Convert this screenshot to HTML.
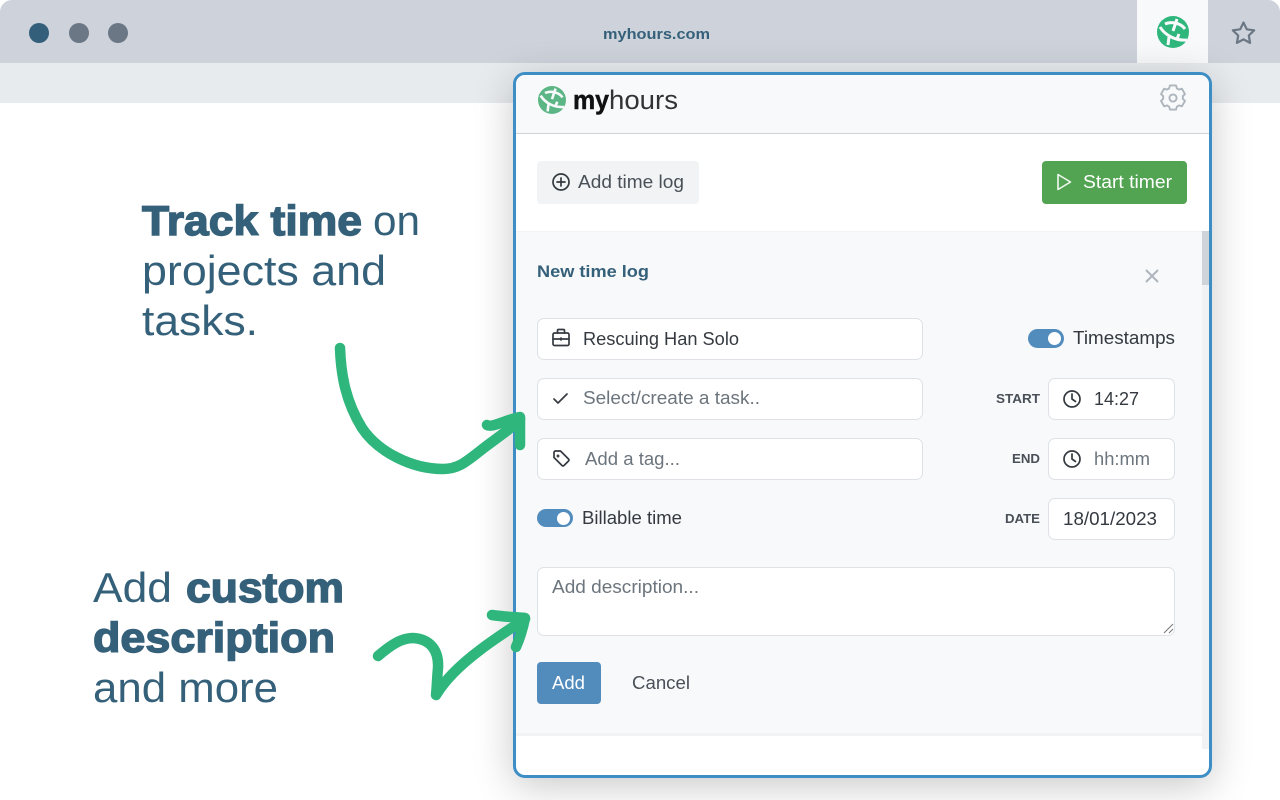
<!DOCTYPE html>
<html lang="en">
<head>
<meta charset="utf-8">
<title>My Hours</title>
<style>
html,body{margin:0;padding:0;width:1280px;height:800px;overflow:hidden;background:#fff;font-family:"Liberation Sans",sans-serif}
.b{position:absolute;box-sizing:border-box}
.inp{background:#fff;border:1.5px solid #dee2e6;border-radius:7px}
svg{position:absolute;left:0;top:0}
text{font-family:"Liberation Sans",sans-serif}
.h{font-size:42px;fill:#35607a}
.hb{font-size:42px;fill:#35607a;font-weight:700;stroke:#35607a;stroke-width:1.4px}
.t{font-size:18px;fill:#343a40}
.p{font-size:18px;fill:#6c757d}
.l{font-size:13px;font-weight:700;fill:#495057}
.ic{fill:none;stroke:#343a40;stroke-width:1.7;stroke-linecap:round;stroke-linejoin:round}
</style>
</head>
<body>
<div class="b" style="left:0;top:0;width:1280px;height:63px;background:#ced3db;border-radius:12px 12px 0 0"></div>
<div class="b" style="left:0;top:63px;width:1280px;height:40px;background:#e8ebee"></div>
<div class="b" style="left:1137px;top:0;width:71px;height:63px;background:#f8f9fb"></div>
<div class="b" style="left:29px;top:23px;width:20px;height:20px;border-radius:50%;background:#345f7a"></div>
<div class="b" style="left:69px;top:23px;width:20px;height:20px;border-radius:50%;background:#6b7785"></div>
<div class="b" style="left:108px;top:23px;width:20px;height:20px;border-radius:50%;background:#6b7785"></div>

<div class="b" style="left:513px;top:72px;width:699px;height:706px;background:#fff;border:3px solid #3d8ec5;border-radius:12px;box-shadow:0 8px 40px rgba(0,0,0,.22);overflow:hidden">
  <div class="b" style="left:0;top:0;width:693px;height:59px;background:#f8f9fb;border-bottom:1px solid #ced4da"></div>
  <div class="b" style="left:0;top:156px;width:686px;height:505px;background:#f8f9fb;border-top:1.5px solid #f1f3f5;border-bottom:3px solid #f1f3f5"></div>
  <div class="b" style="left:686px;top:156px;width:7px;height:518px;background:#f1f2f3"></div>
  <div class="b" style="left:686px;top:156px;width:7px;height:54px;background:#ced4da"></div>
</div>

<div class="b" style="left:537px;top:161px;width:162px;height:43px;background:#f1f3f5;border-radius:4px"></div>
<div class="b" style="left:1042px;top:161px;width:145px;height:43px;background:#52a452;border-radius:4px"></div>
<div class="b inp" style="left:537px;top:318px;width:386px;height:42px"></div>
<div class="b inp" style="left:537px;top:378px;width:386px;height:42px"></div>
<div class="b inp" style="left:537px;top:438px;width:386px;height:42px"></div>
<div class="b inp" style="left:1048px;top:378px;width:127px;height:42px"></div>
<div class="b inp" style="left:1048px;top:438px;width:127px;height:42px"></div>
<div class="b inp" style="left:1048px;top:498px;width:127px;height:42px"></div>
<div class="b inp" style="left:537px;top:567px;width:638px;height:69px"></div>
<div class="b" style="left:537px;top:662px;width:64px;height:42px;background:#528cbd;border-radius:4px"></div>
<div class="b" style="left:1028px;top:329px;width:36px;height:19px;background:#528cbd;border-radius:10px"></div>
<div class="b" style="left:1048px;top:332px;width:13px;height:13px;background:#fff;border-radius:50%"></div>
<div class="b" style="left:537px;top:509px;width:36px;height:18px;background:#528cbd;border-radius:10px"></div>
<div class="b" style="left:557px;top:512px;width:13px;height:13px;background:#fff;border-radius:50%"></div>

<svg width="1280" height="800" viewBox="0 0 1280 800" xmlns="http://www.w3.org/2000/svg">
  <text x="603" y="39" font-size="15" font-weight="700" fill="#35607a" textLength="107" lengthAdjust="spacingAndGlyphs">myhours.com</text>

  <!-- browser tab logo -->
  <g transform="translate(1157,16)">
    <circle cx="16" cy="16" r="16" fill="#2fb67c"/>
    <g fill="none" stroke="#f8f9fb" stroke-width="3" stroke-linecap="butt">
      <path d="M3 11C8 19 18 25 30 24"/>
      <path d="M8 8C14 5 24 7 28 13"/>
      <path d="M20 3L16 15"/>
      <path d="M12 21L11 29"/>
      <path d="M22 18L20 23"/>
    </g>
  </g>
  <!-- star -->
  <path d="M1243.500 22.500l3.300 6.800 7.400 1-5.400 5.200 1.300 7.400-6.600-3.500-6.600 3.500 1.300-7.400-5.400-5.200 7.400-1z" fill="none" stroke="#6b7785" stroke-width="2.200" stroke-linejoin="round"/>

  <!-- popup logo -->
  <g transform="translate(538,86) scale(.875)">
    <circle cx="16" cy="16" r="16" fill="#5cb585"/>
    <g fill="none" stroke="#f8f9fb" stroke-width="3" stroke-linecap="butt">
      <path d="M3 11C8 19 18 25 30 24"/>
      <path d="M8 8C14 5 24 7 28 13"/>
      <path d="M20 3L16 15"/>
      <path d="M12 21L11 29"/>
      <path d="M22 18L20 23"/>
    </g>
  </g>
  <text x="573" y="109" font-size="27" font-weight="700" fill="#111" stroke="#111" stroke-width=".5" textLength="36" lengthAdjust="spacingAndGlyphs">my</text>
  <text x="609" y="109" font-size="27" fill="#333" textLength="69" lengthAdjust="spacingAndGlyphs">hours</text>

  <!-- gear -->
  <g fill="none" stroke="#adb5bd" stroke-width="2.100" stroke-linejoin="round" transform="translate(1173,98) scale(.9) translate(-1173,-98.500)">
    <path d="M1169.600 84.500h6.800l.9 3.300 2.300 1.300 3.300-.9 3.400 5.900-2.400 2.400v2.900l2.400 2.400-3.400 5.900-3.300-.9-2.300 1.300-.9 3.300h-6.800l-.9-3.300-2.300-1.300-3.300.9-3.400-5.900 2.400-2.400v-2.900l-2.400-2.400 3.400-5.900 3.300.9 2.300-1.300z"/>
    <circle cx="1173" cy="98.500" r="4"/>
  </g>

  <!-- add time log -->
  <circle cx="561" cy="182" r="8" class="ic"/>
  <path d="M561 178v8M557 182h8" class="ic"/>
  <text x="578" y="188" class="t" textLength="106" lengthAdjust="spacingAndGlyphs" style="fill:#495057">Add time log</text>

  <!-- start timer -->
  <path d="M1058 174.500l12.500 7.500-12.500 7.500z" fill="none" stroke="#fff" stroke-width="1.600" stroke-linejoin="round" opacity=".92"/>
  <text x="1083" y="188" class="t" style="fill:#fff" textLength="89" lengthAdjust="spacingAndGlyphs">Start timer</text>

  <text x="537" y="277" font-size="17" font-weight="700" fill="#35607a" textLength="112" lengthAdjust="spacingAndGlyphs">New time log</text>
  <path d="M1146 270l12 12M1158 270l-12 12" fill="none" stroke="#adb5bd" stroke-width="2"/>

  <!-- row icons -->
  <g class="ic">
    <rect x="553" y="333" width="16" height="12.500" rx="1.500"/>
    <path d="M557.500 333v-2.500a1 1 0 0 1 1-1h5a1 1 0 0 1 1 1v2.500M553 339h16M561 338v2"/>
    <path d="M554 399l4 4 9-9"/>
    <path d="M554 452.500v5l8 8a1.500 1.500 0 0 0 2 0l4.500-4.500a1.500 1.500 0 0 0 0-2l-8-8h-5a1.500 1.500 0 0 0-1.500 1.500z"/>
    <circle cx="558" cy="456" r=".6"/>
    <circle cx="1072" cy="399" r="8"/>
    <path d="M1072 394v5l3.500 2.500"/>
    <circle cx="1072" cy="459" r="8"/>
    <path d="M1072 454v5l3.500 2.500"/>
  </g>

  <text x="583" y="345" class="t" textLength="156" lengthAdjust="spacingAndGlyphs">Rescuing Han Solo</text>
  <text x="583" y="404" class="p" textLength="177" lengthAdjust="spacingAndGlyphs">Select/create a task..</text>
  <text x="585" y="465" class="p" textLength="95" lengthAdjust="spacingAndGlyphs">Add a tag...</text>
  <text x="582" y="524" class="t" textLength="100" lengthAdjust="spacingAndGlyphs">Billable time</text>
  <text x="1073" y="344" class="t" textLength="102" lengthAdjust="spacingAndGlyphs">Timestamps</text>
  <text x="996" y="403" class="l" textLength="44" lengthAdjust="spacingAndGlyphs">START</text>
  <text x="1012" y="463" class="l" textLength="28" lengthAdjust="spacingAndGlyphs">END</text>
  <text x="1005" y="523" class="l" textLength="35" lengthAdjust="spacingAndGlyphs">DATE</text>
  <text x="1094" y="405" class="t" textLength="45" lengthAdjust="spacingAndGlyphs">14:27</text>
  <text x="1094" y="465" class="p" textLength="56" lengthAdjust="spacingAndGlyphs">hh:mm</text>
  <text x="1063" y="525" class="t" textLength="94" lengthAdjust="spacingAndGlyphs">18/01/2023</text>
  <text x="552" y="593" class="p" textLength="147" lengthAdjust="spacingAndGlyphs">Add description...</text>
  <path d="M1164 633l9-9M1169 633l4-4" stroke="#777" stroke-width="1" fill="none"/>
  <text x="552" y="689" class="t" style="fill:#fff" textLength="33" lengthAdjust="spacingAndGlyphs">Add</text>
  <text x="632" y="689" class="t" style="fill:#495057" textLength="58" lengthAdjust="spacingAndGlyphs">Cancel</text>

  <!-- left copy -->
  <text x="142" y="235" class="hb" textLength="220" lengthAdjust="spacingAndGlyphs">Track time</text>
  <text x="373" y="235" class="h" textLength="47" lengthAdjust="spacingAndGlyphs">on</text>
  <text x="142" y="285" class="h" textLength="244" lengthAdjust="spacingAndGlyphs">projects and</text>
  <text x="142" y="335" class="h" textLength="116" lengthAdjust="spacingAndGlyphs">tasks.</text>
  <text x="93" y="602" class="h" textLength="79" lengthAdjust="spacingAndGlyphs">Add</text>
  <text x="186" y="602" class="hb" textLength="158" lengthAdjust="spacingAndGlyphs">custom</text>
  <text x="93" y="652" class="hb" textLength="242" lengthAdjust="spacingAndGlyphs">description</text>
  <text x="93" y="702" class="h" textLength="185" lengthAdjust="spacingAndGlyphs">and more</text>

  <!-- arrows -->
  <g fill="none" stroke="#2fb67c" stroke-width="10.500" stroke-linecap="round" stroke-linejoin="round">
    <path d="M340 348C341 376 346 402 362 428C378 452 412 469 443 469C458 469 466 462 480 451C495 439 510 430 520 419"/>
    <path d="M487 425C492 428 505 420 520 417L520 445"/>
    <path d="M378 656C392 644 402 638 413 638C430 639 439 650 438 668C437 678 437 686 436 695C445 680 460 665 480 650C497 637 512 628 525 619"/>
    <path d="M492 615C505 617 515 617 525 618C523 628 520 638 516 647"/>
  </g>
</svg>
</body>
</html>
